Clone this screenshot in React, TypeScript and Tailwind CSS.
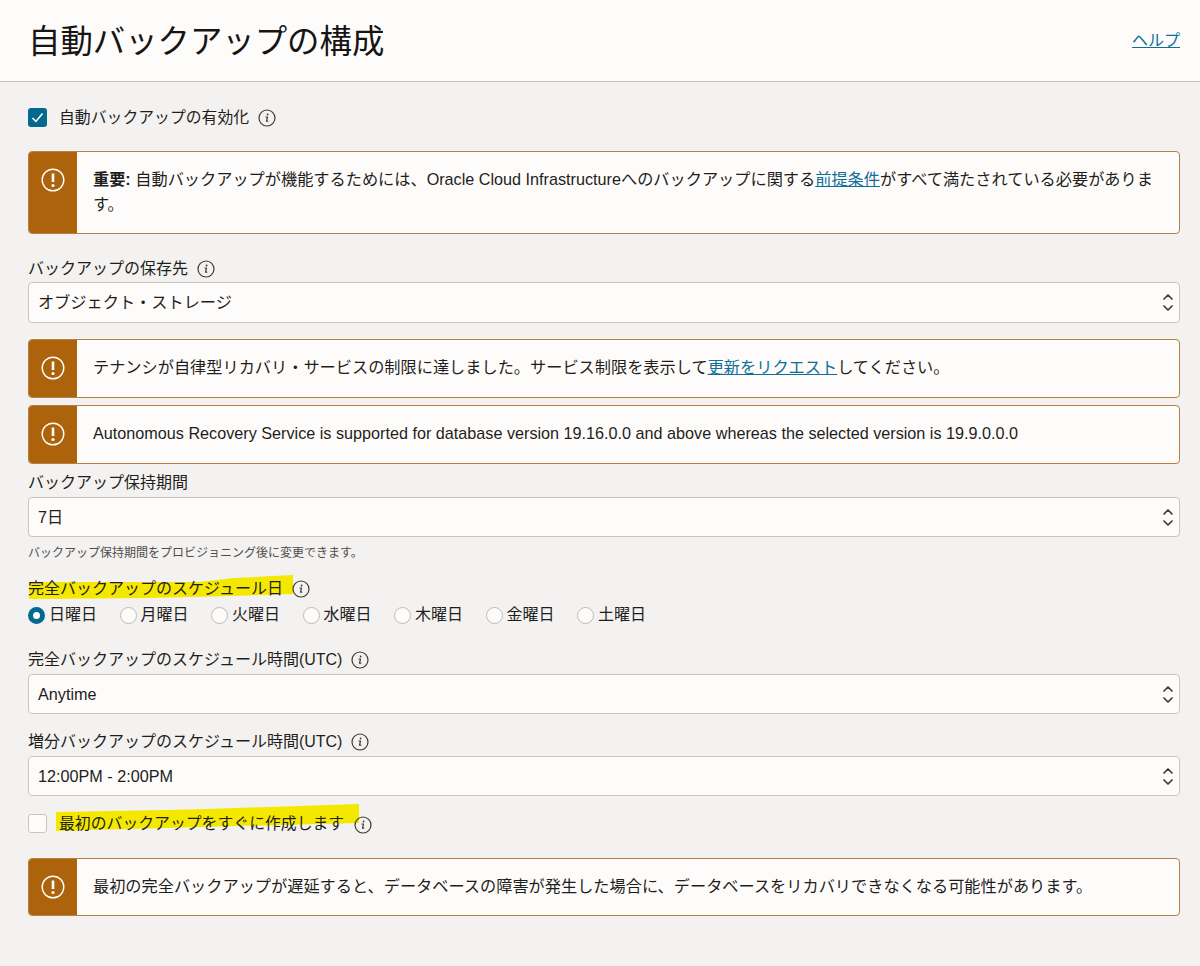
import { ChevronDown, ChevronUp } from "lucide-react";
import type { ReactNode } from "react";

const DAYS = ["日曜日", "月曜日", "火曜日", "水曜日", "木曜日", "金曜日", "土曜日"];

function InfoIcon() {
  return (
    <svg width="18" height="18" viewBox="0 0 18 18" fill="none" className="shrink-0">
      <circle cx="9" cy="9" r="8" stroke="#3d3b38" strokeWidth="1.2" />
      <path d="M8 8h1.5l-1 4.2h1.3" stroke="#3d3b38" strokeWidth="1.2" strokeLinecap="round" strokeLinejoin="round" />
      <circle cx="9.6" cy="5.5" r="0.9" fill="#3d3b38" />
    </svg>
  );
}

function Alert({ children, className }: { children: ReactNode; className: string }) {
  return (
    <div className={`flex rounded border border-[#b87f42] bg-[#fdfcfb] overflow-hidden ${className}`}>
      <div className="w-[48px] shrink-0 bg-[#ac630c] flex justify-center pt-[16px]">
        <svg width="24" height="24" viewBox="0 0 24 24" fill="none">
          <circle cx="12" cy="12" r="10.8" stroke="#fff" strokeWidth="1.4" />
          <path d="M12 5.5v8.5" stroke="#fff" strokeWidth="2.6" />
          <circle cx="12" cy="17.5" r="1.6" fill="#fff" />
        </svg>
      </div>
      <div className="flex-1 pl-[16px] pr-[16px] pt-[15px] text-[16.2px] leading-[25px] text-[#1f1e1c]">{children}</div>
    </div>
  );
}

function Select({ value, className }: { value: string; className: string }) {
  return (
    <div className={`rounded border border-[#c9c6c2] bg-[#fdfcfb] flex items-center justify-between pl-[9px] pr-[3px] text-[16.2px] text-[#1f1e1c] ${className}`}>
      <span>{value}</span>
      <span className="flex flex-col items-center text-[#3d3b38]">
        <ChevronUp size={16} strokeWidth={2.6} className="-mb-[2.5px]" />
        <ChevronDown size={16} strokeWidth={2.6} className="-mt-[2.5px]" />
      </span>
    </div>
  );
}

function Label({ children, className }: { children: ReactNode; className: string }) {
  return (
    <div className={`flex items-center gap-[9px] h-[24px] text-[16px] text-[#1f1e1c] ${className}`}>
      <span>{children}</span>
      <InfoIcon />
    </div>
  );
}

export default function App() {
  return (
    <div className="w-[1200px] h-[966px] overflow-hidden bg-[#f3f2f1] font-['Liberation_Sans','Noto_Sans_CJK_JP',sans-serif]">
      <header className="h-[82px] bg-[#fdfcfb] border-b border-[#c4c2bf] flex items-center justify-between pl-[28px] pr-[20px]">
        <h1 className="text-[32.4px] leading-none text-[#161513] mt-[3px]">自動バックアップの構成</h1>
        <a href="#" className="text-[16px] text-[#0f6f99] underline">ヘルプ</a>
      </header>

      <main className="pl-[28px] pr-[20px]">
        <div className="flex items-center mt-[26px] h-[19px] text-[15.85px] text-[#1f1e1c]">
          <span className="w-[19px] h-[19px] rounded-[3px] bg-[#04698f] flex items-center justify-center">
            <svg width="13" height="13" viewBox="0 0 13 13" fill="none">
              <path d="M1.5 7l3.4 3.4 6.6-8" stroke="#fff" strokeWidth="1.6" />
            </svg>
          </span>
          <span className="ml-[12px]">自動バックアップの有効化</span>
          <span className="ml-[9px]"><InfoIcon /></span>
        </div>

        <Alert className="h-[83px] mt-[24px]">
          <b className="font-bold">重要:</b> 自動バックアップが機能するためには、Oracle Cloud Infrastructureへのバックアップに関する
          <a href="#" className="text-[#0f6f99] underline">前提条件</a>がすべて満たされている必要があります。
        </Alert>

        <Label className="mt-[23px] mb-[1px]">バックアップの保存先</Label>
        <Select value="オブジェクト・ストレージ" className="h-[41px]" />

        <Alert className="h-[59px] mt-[16px]">
          テナンシが自律型リカバリ・サービスの制限に達しました。サービス制限を表示して
          <a href="#" className="text-[#0f6f99] underline">更新をリクエスト</a>してください。
        </Alert>
        <Alert className="h-[59px] mt-[7px]">
          Autonomous Recovery Service is supported for database version 19.16.0.0 and above whereas the selected version is 19.9.0.0.0
        </Alert>

        <div className="mt-[7px] h-[24px] mb-[2px] flex items-center text-[16px] text-[#1f1e1c]">バックアップ保持期間</div>
        <Select value="7日" className="h-[40px]" />
        <div className="mt-[8px] h-[16px] flex items-center text-[12px] text-[#4f4d4a]">バックアップ保持期間をプロビジョニング後に変更できます。</div>

        <div className="relative mt-[16px] mb-[2px] flex items-center gap-[9px] h-[24px] text-[16px] text-[#1f1e1c]">
          <svg width="266" height="26" viewBox="0 0 266 26" className="absolute left-[1px] -top-[2px]">
            <path d="M0 7L170 7 205 3 264 0 264 19 200 21 120 23 0 24Z" fill="#f5e800" />
          </svg>
          <span className="relative">完全バックアップのスケジュール日</span>
          <span className="relative"><InfoIcon /></span>
        </div>

        <div className="flex h-[24px] items-center text-[16px] text-[#1f1e1c]">
          {DAYS.map((d, i) => (
            <div key={d} className="flex items-center w-[91.5px]">
              {i === 0 ? (
                <span className="w-[17px] h-[17px] rounded-full border-[5px] border-[#04698f] bg-white" />
              ) : (
                <span className="w-[17px] h-[17px] rounded-full border border-[#bdbab6] bg-[#fdfcfb]" />
              )}
              <span className="ml-[4px]">{d}</span>
            </div>
          ))}
        </div>

        <Label className="mt-[21px] mb-[2px]">完全バックアップのスケジュール時間(UTC)</Label>
        <Select value="Anytime" className="h-[40px]" />

        <Label className="mt-[16px] mb-[2px]">増分バックアップのスケジュール時間(UTC)</Label>
        <Select value="12:00PM - 2:00PM" className="h-[40px]" />

        <div className="relative flex items-center mt-[18px] h-[19px] text-[15.85px] text-[#1f1e1c]">
          <svg width="306" height="30" viewBox="0 0 306 30" className="absolute left-[28px] -top-[10px]">
            <path d="M0 8L110 6 150 5 303 0 303 19 144 23 0 27Z" fill="#f5e800" />
          </svg>
          <span className="w-[19px] h-[19px] rounded-[3px] border border-[#c9c6c2] bg-[#fdfcfb]" />
          <span className="relative ml-[12px]">最初のバックアップをすぐに作成します</span>
          <span className="relative ml-[10px] mt-[3px]"><InfoIcon /></span>
        </div>

        <Alert className="h-[58px] mt-[25px]">
          最初の完全バックアップが遅延すると、データベースの障害が発生した場合に、データベースをリカバリできなくなる可能性があります。
        </Alert>
      </main>
    </div>
  );
}
